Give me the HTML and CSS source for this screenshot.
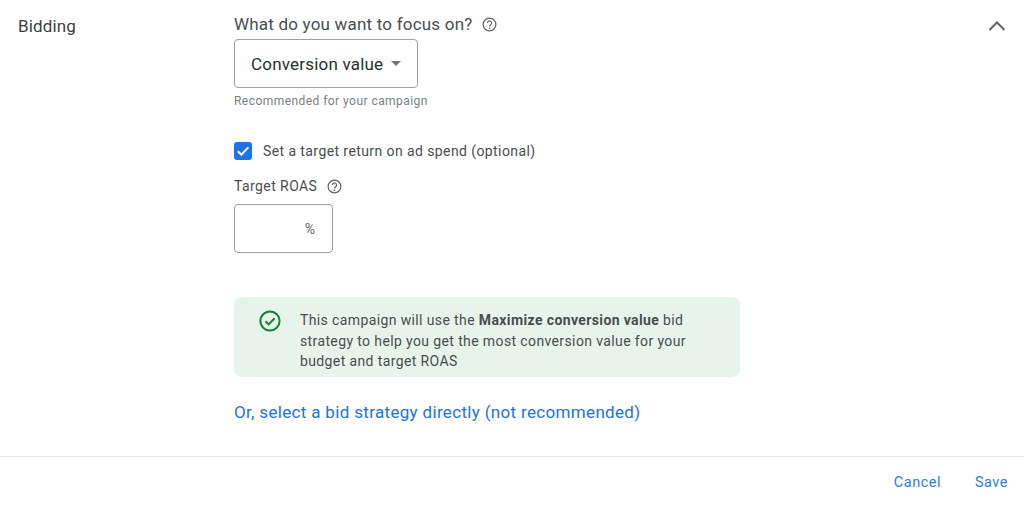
FILE: index.html
```html
<!DOCTYPE html>
<html lang="en">
<head>
<meta charset="utf-8">
<title>Bidding</title>
<link rel="stylesheet" href="styles.css">
</head>
<body>
<main class="section">
  <h2 class="section-title">Bidding</h2>
  <div class="content">
    <div class="label-row focus-row">
      <span class="focus-label">What do you want to focus on?</span>
      <svg class="help" viewBox="0 0 16 16" aria-hidden="true"><circle cx="8" cy="8" r="6.800"/><path d="M5.800 6.400a2.200 2.200 0 1 1 3.500 1.800C8.500 8.800 8 9.200 8 10"/><circle class="dot" cx="8" cy="12" r=".9"/></svg>
    </div>
    <div class="select"><span>Conversion value</span><i class="caret"></i></div>
    <p class="hint">Recommended for your campaign</p>
    <label class="check-row">
      <span class="checkbox"><svg viewBox="0 0 18 18" aria-hidden="true"><path d="M3.800 9.200l3.500 3.500 7-7.300"/></svg></span>
      <span>Set a target return on ad spend (optional)</span>
    </label>
    <div class="label-row roas-row">
      <span>Target ROAS</span>
      <svg class="help" viewBox="0 0 16 16" aria-hidden="true"><circle cx="8" cy="8" r="6.800"/><path d="M5.800 6.400a2.200 2.200 0 1 1 3.500 1.800C8.500 8.800 8 9.200 8 10"/><circle class="dot" cx="8" cy="12" r=".9"/></svg>
    </div>
    <div class="percent-input"><span>%</span></div>
    <div class="notice">
      <svg class="ok" viewBox="0 0 22 22" aria-hidden="true"><circle cx="11" cy="11" r="9.600"/><path d="M6.500 11.300l3.100 3.100 6-6.200"/></svg>
      <p>This campaign will use the <b>Maximize conversion value</b> bid strategy to help you get the most conversion value for your budget and target ROAS</p>
    </div>
    <a class="direct-link" href="#">Or, select a bid strategy directly (not recommended)</a>
  </div>
  <svg class="collapse" viewBox="0 0 18 12" aria-hidden="true"><path d="M1.500 10l7.500-7.500 7.500 7.500"/></svg>
</main>
<footer class="actions">
  <a href="#">Cancel</a>
  <a href="#">Save</a>
</footer>
</body>
</html>
```
FILE: styles.css
```css
* { box-sizing: border-box; }
html, body { margin: 0; padding: 0; background: #fff; }
body {
  width: 1024px;
  height: 508px;
  overflow: hidden;
  font-family: Roboto, "Liberation Sans", sans-serif;
  color: #4a4d51;
}
.section {
  display: grid;
  grid-template-columns: 216px 1fr auto;
  height: 457px;
  padding: 0 18px;
  border-bottom: 1px solid #e8e8e8;
}
.section-title {
  margin: 16px 0 0;
  font-size: 17px;
  line-height: 20px;
  font-weight: 400;
  letter-spacing: .15px;
  color: #3c4043;
}
.content { display: flex; flex-direction: column; align-items: flex-start; padding-top: 14px; }
.label-row { display: flex; align-items: center; }
.focus-row { font-size: 17px; line-height: 20px; gap: 10px; letter-spacing: .2px; height: 20px; }
.help { width: 15px; height: 15px; fill: none; stroke: #5f6368; stroke-width: 1.300; }
.help .dot { fill: #5f6368; stroke: none; }
.select {
  display: flex;
  align-items: center;
  width: 184px;
  height: 49px;
  margin-top: 5px;
  padding-left: 16px;
  border: 1px solid #9aa0a6;
  border-radius: 4px;
  font-size: 17px;
  letter-spacing: .2px;
  color: #2b2d30;
}
.caret {
  margin-left: 8px;
  border-left: 5px solid transparent;
  border-right: 5px solid transparent;
  border-top: 5px solid #70757a;
}
.hint { margin: 5px 0 0; font-size: 12px; line-height: 16px; letter-spacing: .45px; color: #7b7f84; }
.check-row { display: flex; align-items: center; gap: 11px; margin-top: 32px; font-size: 14px; line-height: 20px; letter-spacing: .41px; }
.checkbox { width: 18px; height: 18px; border-radius: 3px; background: #1a73e8; display: block; }
.checkbox svg { display: block; width: 18px; height: 18px; fill: none; stroke: #fff; stroke-width: 2; }
.roas-row { gap: 10px; margin-top: 15px; font-size: 14px; line-height: 20px; letter-spacing: .42px; }
.percent-input {
  display: flex;
  align-items: center;
  justify-content: flex-end;
  width: 99px;
  height: 49px;
  margin-top: 8px;
  padding-right: 17px;
  border: 1px solid #9aa0a6;
  border-radius: 4px;
  font-size: 14px;
  color: #5f6368;
}
.notice {
  display: flex;
  gap: 19px;
  width: 506px;
  height: 80px;
  margin-top: 44px;
  padding: 4px 0 0 25px;
  border-radius: 8px;
  background: #e7f4ec;
}
.ok { flex: none; width: 22px; height: 22px; margin-top: 9px; fill: none; stroke: #1b7f3b; stroke-width: 2; }
.notice p { margin: 0; width: 400px; font-size: 14px; line-height: 20.500px; letter-spacing: .38px; padding-top: 9px; }
.notice b { font-weight: 700; }
.direct-link { margin-top: 25px; font-size: 17px; line-height: 20px; letter-spacing: .33px; color: #2372d9; text-decoration: none; font-weight: 450; }
.collapse { width: 18px; height: 12px; margin: 20px 0 0; fill: none; stroke: #5f6368; stroke-width: 2; }
.actions { display: flex; justify-content: flex-end; gap: 34px; padding: 18px 16px 0 0; font-size: 14.500px; line-height: 16px; letter-spacing: .5px; }
.actions a { color: #2f7ddc; text-decoration: none; font-weight: 450; }
```
